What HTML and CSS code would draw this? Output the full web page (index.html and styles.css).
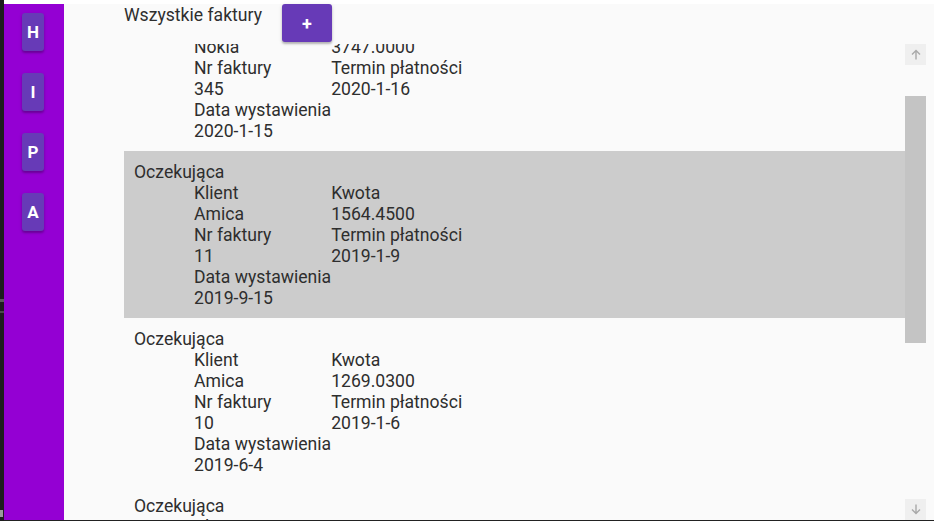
FILE: index.html
```html
<!DOCTYPE html>
<html lang="pl">
<head>
<meta charset="utf-8">
<title>Wszystkie faktury</title>
<link rel="stylesheet" href="styles.css">
</head>
<body>
<div class="frame">
  <div class="strip">
    <span class="mark mark-a"></span>
    <span class="mark mark-b"></span>
    <span class="mark mark-c"></span>
  </div>
  <div class="window">
    <div class="topband"></div>
    <div class="app">
      <nav class="sidebar">
        <button class="nav-btn">H</button>
        <button class="nav-btn">I</button>
        <button class="nav-btn">P</button>
        <button class="nav-btn">A</button>
      </nav>
      <main class="main">
        <header class="header">
          <h1 class="title">Wszystkie faktury</h1>
          <button class="add-btn">+</button>
        </header>
        <div class="list-wrap">
          <div class="viewport">
            <div class="list">
              <div class="item">
                <div class="status">Oczekująca</div>
                <div class="details">
                  <div>Klient</div><div>Kwota</div>
                  <div>Nokia</div><div>3747.0000</div>
                  <div>Nr faktury</div><div>Termin płatności</div>
                  <div>345</div><div>2020-1-16</div>
                  <div>Data wystawienia</div><div></div>
                  <div>2020-1-15</div><div></div>
                </div>
              </div>
              <div class="item item-active">
                <div class="status">Oczekująca</div>
                <div class="details">
                  <div>Klient</div><div>Kwota</div>
                  <div>Amica</div><div>1564.4500</div>
                  <div>Nr faktury</div><div>Termin płatności</div>
                  <div>11</div><div>2019-1-9</div>
                  <div>Data wystawienia</div><div></div>
                  <div>2019-9-15</div><div></div>
                </div>
              </div>
              <div class="item">
                <div class="status">Oczekująca</div>
                <div class="details">
                  <div>Klient</div><div>Kwota</div>
                  <div>Amica</div><div>1269.0300</div>
                  <div>Nr faktury</div><div>Termin płatności</div>
                  <div>10</div><div>2019-1-6</div>
                  <div>Data wystawienia</div><div></div>
                  <div>2019-6-4</div><div></div>
                </div>
              </div>
              <div class="item">
                <div class="status">Oczekująca</div>
                <div class="details">
                  <div>Klient</div><div>Kwota</div>
                  <div>Samsung</div><div>980.0000</div>
                  <div>Nr faktury</div><div>Termin płatności</div>
                  <div>9</div><div>2019-1-3</div>
                  <div>Data wystawienia</div><div></div>
                  <div>2019-5-20</div><div></div>
                </div>
              </div>
            </div>
          </div>
          <div class="scrollbar">
            <div class="sb-btn">
              <svg width="10" height="11" viewBox="0 0 10 11"><path d="M5 10.5V1.5M1 5.5L5 1.5L9 5.5" fill="none" stroke="#a9a9a9" stroke-width="1.4"/></svg>
            </div>
            <div class="track"><div class="thumb"></div></div>
            <div class="sb-btn">
              <svg width="10" height="11" viewBox="0 0 10 11"><path d="M5 0.5V9.5M1 5.5L5 9.5L9 5.5" fill="none" stroke="#a9a9a9" stroke-width="1.4"/></svg>
            </div>
          </div>
        </div>
      </main>
    </div>
    <div class="bottomline"></div>
  </div>
</div>
</body>
</html>
```
FILE: styles.css
```css
* { box-sizing: border-box; }
html, body { margin: 0; padding: 0; }
body {
  width: 934px;
  height: 521px;
  overflow: hidden;
  font-family: Roboto, "Liberation Sans", sans-serif;
  background: #fafafa;
}
.frame {
  display: flex;
  height: 521px;
}
.strip {
  width: 4px;
  flex: none;
  background: #1d1d1d;
  display: flex;
  flex-direction: column;
}
.mark { display: block; width: 4px; background: #5a5a5a; }
.mark-a { margin-top: 299px; height: 3px; }
.mark-b { margin-top: 9px; height: 2px; background: #4a4a4a; }
.mark-c { margin-top: 197px; height: 7px; width: 3px; background: #9a9a9a; }
.window {
  flex: 1;
  display: flex;
  flex-direction: column;
}
.topband { height: 4px; background: #ffffff; flex: none; }
.bottomline { height: 1px; background: #222; flex: none; }
.app {
  flex: 1;
  display: flex;
  min-height: 0;
}
.sidebar {
  width: 60px;
  flex: none;
  background: #9400d3;
  display: flex;
  flex-direction: column;
  align-items: flex-start;
  gap: 22px;
  padding: 9px 0 0 18px;
}
.nav-btn {
  width: 22px;
  height: 38px;
  border: none;
  border-radius: 3px;
  background: #673ab7;
  color: #fff;
  font-family: Roboto, "Liberation Sans", sans-serif;
  font-weight: 700;
  font-size: 17px;
  padding: 0;
  box-shadow: 0 2px 2px rgba(0,0,0,.22), 0 1px 4px rgba(0,0,0,.12);
}
.main {
  flex: 1;
  display: flex;
  flex-direction: column;
  padding: 0 8px 0 60px;
  min-width: 0;
}
.header {
  height: 40px;
  flex: none;
  display: flex;
  align-items: flex-start;
}
.title {
  margin: 0;
  font-size: 17.6px;
  font-weight: 400;
  line-height: 22px;
  color: #2e2e2e;
}
.add-btn {
  margin-left: 20px;
  width: 50px;
  height: 38px;
  border: none;
  border-radius: 3px;
  background: #673ab7;
  color: #fff;
  font-family: Roboto, "Liberation Sans", sans-serif;
  font-weight: 700;
  font-size: 18px;
  padding: 0;
  box-shadow: 0 2px 2px rgba(0,0,0,.22), 0 1px 4px rgba(0,0,0,.12);
}
.list-wrap {
  flex: 1;
  display: flex;
  min-height: 0;
}
.viewport {
  flex: 1;
  overflow: hidden;
}
.list { margin-top: -60px; }
.item {
  padding: 11px 10px 9px;
  font-size: 17.6px;
  line-height: 21px;
  color: #2e2e2e;
}
.item-active { background: #cccccc; }
.details {
  margin-left: 60px;
  display: grid;
  grid-template-columns: max-content max-content;
}
.scrollbar {
  width: 21px;
  flex: none;
  display: flex;
  flex-direction: column;
}
.sb-btn {
  height: 21px;
  flex: none;
  background: #efefef;
  display: flex;
  align-items: center;
  justify-content: center;
}
.track { flex: 1; }
.thumb {
  margin-top: 31px;
  height: 247px;
  background: #c4c4c4;
}
```
